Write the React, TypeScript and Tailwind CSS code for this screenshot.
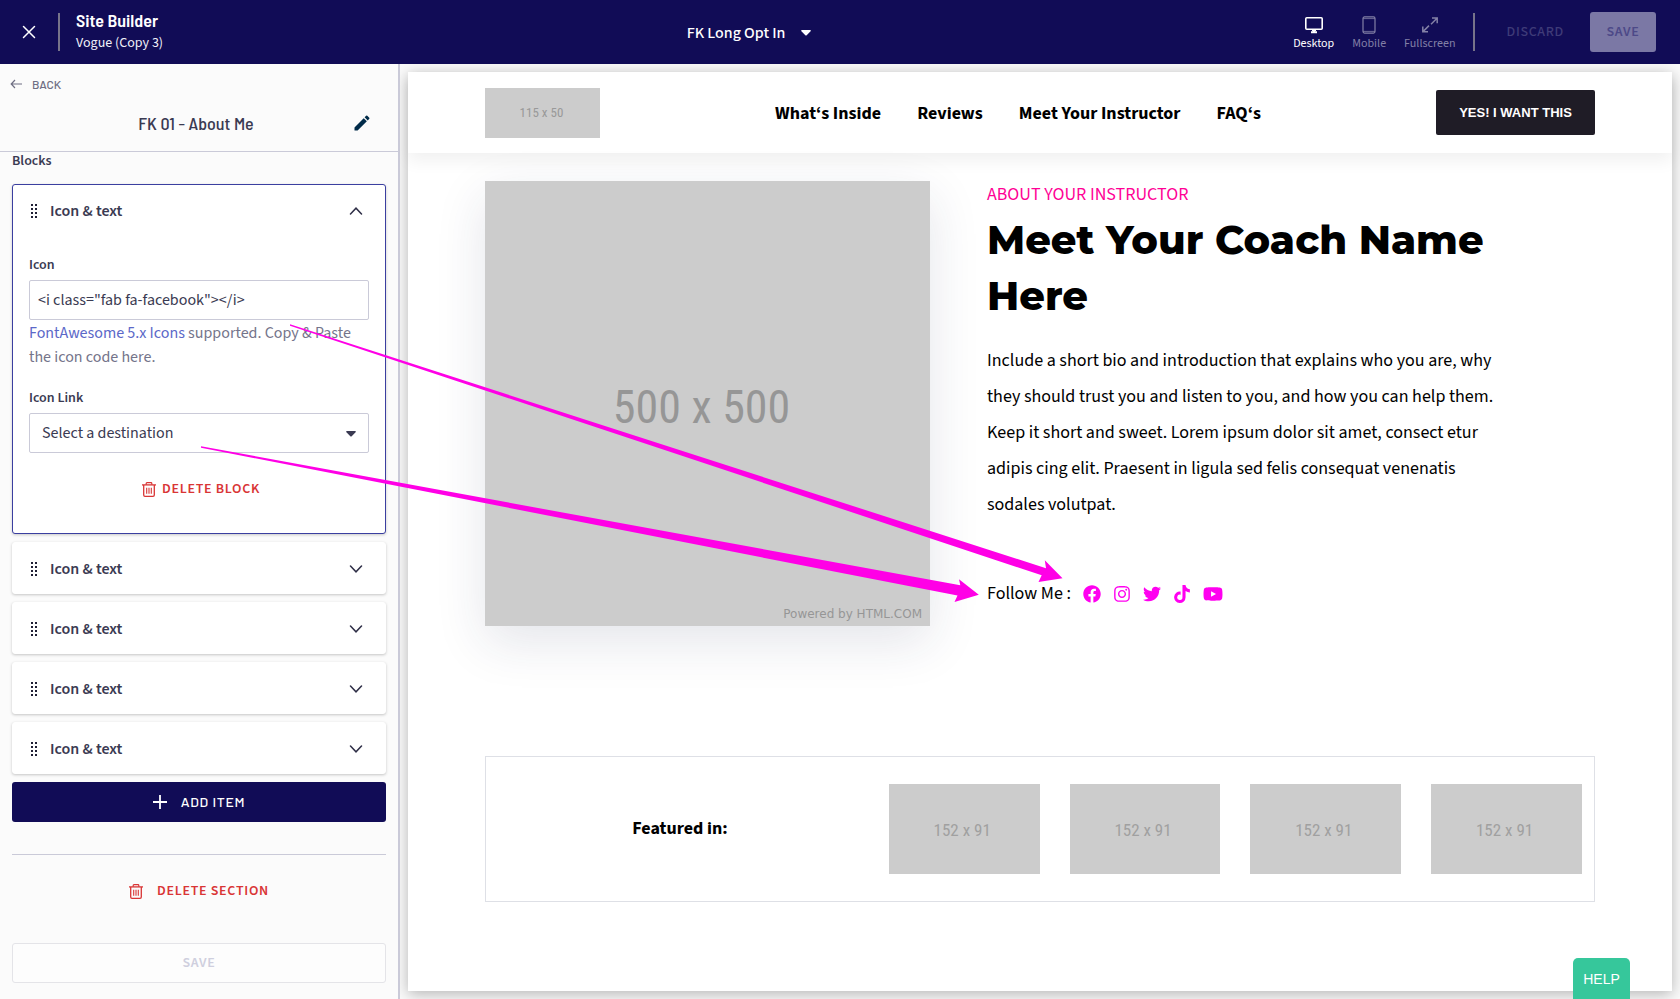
import React from "react";
import { FaFacebook, FaInstagram, FaTwitter, FaTiktok, FaYoutube } from "react-icons/fa";
import { MdEdit } from "react-icons/md";

const BARLOW = "font-['Barlow_Semi_Condensed','Roboto',sans-serif]";
const BARLOW_WIDE = "font-['Barlow','Roboto',sans-serif]";
const SOURCE = "font-['Source_Sans_3','Noto_Sans_CJK_SC',sans-serif]";
const NARROW = "font-['Roboto_Condensed','Roboto',sans-serif]";

function Caret({ className }: { className: string }) {
  return (
    <svg className={className} width="10" height="6" viewBox="0 0 10 6" fill="currentColor" aria-hidden="true">
      <path d="M1 0h8c.8 0 1.200.8.6 1.300L5.700 5.200a1 1 0 0 1-1.400 0L.4 1.300C-.2.8.2 0 1 0z" />
    </svg>
  );
}

function Chevron({ up = false }: { up?: boolean }) {
  return (
    <svg width="14" height="8" viewBox="0 0 14 8" fill="none" stroke="#2f2f47" strokeWidth="1.500" strokeLinecap="round" aria-hidden="true">
      <path d={up ? "M1.500 7L7 1.200L12.500 7" : "M1.500 1L7 6.800L12.500 1"} />
    </svg>
  );
}

function Grip() {
  return (
    <svg width="6" height="14" viewBox="0 0 6 14" fill="#1f1f35" shapeRendering="crispEdges" aria-hidden="true">
      {[0, 4, 8, 12].map((y) => (
        <React.Fragment key={y}>
          <rect x="0" y={y} width="2" height="2" />
          <rect x="4" y={y} width="2" height="2" />
        </React.Fragment>
      ))}
    </svg>
  );
}

function Trash() {
  return (
    <svg width="14" height="15" viewBox="0 0 14 15" fill="none" stroke="currentColor" aria-hidden="true">
      <path d="M0 2.900h14" strokeWidth="1.300" />
      <path d="M4.200 2.700V1.500c0-.5.3-.8.8-.8h4c.5 0 .8.3.8.8v1.200" strokeWidth="1.200" />
      <path d="M1.700 3v10c0 .8.5 1.300 1.300 1.300h8c.8 0 1.300-.5 1.300-1.300V3" strokeWidth="1.300" />
      <path d="M4.700 5.700v6M7 5.700v6M9.300 5.700v6" strokeWidth="1.100" />
    </svg>
  );
}

function BlockHeader({ open = false }: { open?: boolean }) {
  return (
    <button type="button" aria-expanded={open} className="flex h-[50px] w-full items-center pl-[18px] pr-[22px] pt-0.5 text-left">
      <Grip />
      <span className="ml-[13px] flex-1 text-base font-semibold text-[#3a3a52]">Icon &amp; text</span>
      <Chevron up={open} />
    </button>
  );
}

function TopBar() {
  return (
    <header className="flex h-16 shrink-0 items-center justify-between bg-[#110c56] pr-6 text-white">
      <div className="flex w-[205px] items-center">
        <button type="button" aria-label="Close" className="ml-[22px]">
          <svg width="14" height="14" viewBox="0 0 14 14" stroke="currentColor" strokeWidth="1.500" strokeLinecap="round">
            <path d="M1.500 1.500l11 11M12.500 1.500l-11 11" />
          </svg>
        </button>
        <span className="ml-[22px] h-[38px] w-0.5 bg-[#77748a]" />
        <div className="ml-4 flex flex-col gap-0.5 pb-0.5">
          <h1 className={`${BARLOW} text-lg leading-[22px] font-semibold`}>Site Builder</h1>
          <p className="text-sm leading-5 text-[#f0f0f8]">Vogue (Copy 3)</p>
        </div>
      </div>
      <div className="relative pt-0.5">
        <select aria-label="Page" className="appearance-none bg-transparent pr-[26px] text-base font-medium [field-sizing:content]">
          <option>FK Long Opt In</option>
        </select>
        <Caret className="pointer-events-none absolute top-[11px] right-0" />
      </div>
      <div className="flex items-center">
        <nav aria-label="Preview size" className="flex gap-[18px] pt-[3px] text-xs leading-4">
          <button type="button" className="flex flex-col items-center gap-0.5">
            <svg width="18" height="18" viewBox="0 0 18 18" fill="none" stroke="currentColor" strokeWidth="1.600">
              <rect x=".8" y="1.800" width="16.400" height="11.400" rx="1" />
              <path d="M6 16.200h6M9 13v3" strokeWidth="2" />
              <path d="M7 14.500h4" />
            </svg>
            Desktop
          </button>
          <button type="button" className="flex flex-col items-center gap-0.5 text-[#8380a6]">
            <svg width="14" height="18" viewBox="0 0 14 18" fill="none" stroke="currentColor" strokeWidth="1.200">
              <rect x="1" y=".9" width="12" height="16.200" rx="1.500" />
              <path d="M1 2.600h12M1 15.400h12" strokeWidth=".8" />
            </svg>
            Mobile
          </button>
          <button type="button" className="flex flex-col items-center gap-0.5 text-[#8380a6]">
            <svg width="18" height="18" viewBox="0 0 18 18" fill="none" stroke="currentColor" strokeWidth="1.500">
              <path d="M11 2h5.200v5.200M16 2.200l-6 6M7 15.800H1.800v-5.200M2 15.600l6-6" />
            </svg>
            Fullscreen
          </button>
        </nav>
        <span className="ml-[17px] h-[38px] w-0.5 bg-[#77748a]" />
        <button type="button" disabled className="ml-4 h-10 px-4 text-sm font-medium tracking-wider text-[#3f3b78]">
          DISCARD
        </button>
        <button type="button" disabled className="ml-2.5 h-10 w-[66px] rounded-[3px] bg-[#7b78a5] text-sm font-semibold tracking-wider text-[#4d4988]">
          SAVE
        </button>
      </div>
    </header>
  );
}

function Sidebar() {
  return (
    <aside className="flex w-[400px] shrink-0 flex-col border-r-2 border-[#cacad8] bg-[#fbfbfb] text-[#3a3a52]">
      <div className="border-b border-[#cacad8]">
        <a href="#sections" className={`${BARLOW_WIDE} mt-2.5 ml-2.5 flex w-fit items-center gap-2.5 text-xs leading-5 font-medium text-[#6f6f83]`}>
          <svg width="12" height="10" viewBox="0 0 12 10" fill="none" stroke="currentColor" strokeWidth="1.200" aria-hidden="true">
            <path d="M5 1L1.200 5L5 9M1.200 5H12" />
          </svg>
          BACK
        </a>
        <div className="mt-[15px] mb-3.5 flex h-7 items-center pl-9 pr-[26px]">
          <h2 className={`${BARLOW} flex-1 pl-2 pr-1 text-center text-lg font-medium`}>FK 01 - About Me</h2>
          <button type="button" aria-label="Rename section">
            <MdEdit size={20} color="#002b49" />
          </button>
        </div>
      </div>
      <div className="flex flex-1 flex-col px-3 pb-4">
        <h3 className="text-sm leading-[18px] font-semibold">Blocks</h3>
        <div className="mt-3.5 flex flex-col gap-2">
          <section className="rounded-[3px] border border-[#3b3fa0] bg-white shadow-[0_1px_3px_rgba(0,0,0,0.2)]">
            <BlockHeader open />
            <div className="flex flex-col px-4 pt-5 pb-6">
              <label htmlFor="icon" className="text-sm leading-5 font-semibold">Icon</label>
              <input id="icon" type="text" defaultValue={'<i class="fab fa-facebook"></i>'} className="mt-[5px] h-10 w-full rounded-[2px] border border-[#cacad8] bg-white px-2 text-base" />
              <p className="mt-px text-base leading-6 text-[#74748a]">
                <a href="#fontawesome" className="text-[#5b68c8]">FontAwesome 5.x Icons</a> supported. Copy &amp; Paste the icon code here.
              </p>
              <label htmlFor="link" className="mt-[19px] text-sm leading-5 font-semibold">Icon Link</label>
              <div className="relative mt-[5px]">
                <select id="link" className="h-10 w-full appearance-none rounded-[2px] border border-[#cacad8] bg-white px-3 text-base">
                  <option>Select a destination</option>
                </select>
                <Caret className="pointer-events-none absolute top-[18px] right-[13px]" />
              </div>
              <button type="button" className="mt-4 flex h-10 items-center justify-center gap-1.5 pl-1 text-sm font-semibold tracking-wider text-[#d93535]">
                <Trash />
                DELETE BLOCK
              </button>
            </div>
          </section>
          {[1, 2, 3, 4].map((n) => (
            <section key={n} className="rounded-[3px] border border-white bg-white shadow-[0_1px_3px_rgba(0,0,0,0.22)]">
              <BlockHeader />
            </section>
          ))}
          <button type="button" className={`${BARLOW_WIDE} flex h-10 items-center justify-center gap-3.5 rounded-[3px] bg-[#110c56] text-sm font-medium tracking-wider text-white`}>
            <svg width="14" height="14" viewBox="0 0 14 14" stroke="currentColor" strokeWidth="1.800" aria-hidden="true">
              <path d="M7 0v14M0 7h14" />
            </svg>
            ADD ITEM
          </button>
        </div>
        <hr className="mt-8 border-[#cacad8]" />
        <button type="button" className="mt-4 flex h-10 items-center justify-center gap-3.5 text-sm font-semibold tracking-wider text-[#d93535]">
          <Trash />
          DELETE SECTION
        </button>
        <button type="button" disabled className="mt-auto h-10 rounded-[3px] border border-[#e4e4e8] bg-[#fdfdfd] text-sm font-semibold tracking-wider text-[#cfcfde]">
          SAVE
        </button>
      </div>
    </aside>
  );
}

function Preview() {
  return (
    <main className="flex min-w-0 flex-1 flex-col overflow-hidden bg-[#fafafa] p-2 text-lg text-black">
      <div className="flex-1 bg-white shadow-[0_3px_14px_rgba(0,0,0,0.28)]">
        <div className="relative bg-white shadow-[0_8px_16px_rgba(0,0,0,0.06)]">
          <div className="mx-auto flex h-[81px] max-w-[1110px] items-center justify-between">
            <div className={`${NARROW} flex h-[50px] w-[115px] items-center justify-center bg-[#ccc] pt-0.5 pr-0.5 text-[13px] text-[#999]`}>115 x 50</div>
            <nav className="flex gap-9 pt-0.5 font-bold">
              <a href="#inside">What‘s Inside</a>
              <a href="#reviews">Reviews</a>
              <a href="#instructor">Meet Your Instructor</a>
              <a href="#faq">FAQ‘s</a>
            </nav>
            <button type="button" className="h-[45px] w-[159px] rounded-[2px] bg-[#1f1c26] pt-0.5 font-['Liberation_Sans',Arial,sans-serif] text-[13px] font-bold text-white">
              YES! I WANT THIS
            </button>
          </div>
        </div>
        <div className="mx-auto max-w-[1110px] pt-7">
          <section id="instructor" className="flex items-start">
            <div className="relative flex aspect-square w-[445px] items-center justify-center bg-[#ccc] pt-2 pr-3 shadow-[0_16px_48px_rgba(31,45,80,0.12)]">
              <span className={`${NARROW} text-[46px] text-[#969696]`}>500 x 500</span>
              <span className="absolute right-2 bottom-1 font-['DejaVu_Sans',sans-serif] text-xs text-[#969696]">Powered by HTML.COM</span>
            </div>
            <div className="ml-[57px] max-w-lg">
              <p className="leading-[27px] text-[#ff0095]">ABOUT YOUR INSTRUCTOR</p>
              <h2 className="mt-1 font-['Montserrat','Open_Sans',sans-serif] text-[40px] leading-14 font-extrabold">Meet Your Coach Name Here</h2>
              <p className="mt-[19px] leading-9">
                Include a short bio and introduction that explains who you are, why they should trust you and listen to you, and how you can help them. Keep it short and sweet. Lorem ipsum dolor sit amet, consect etur adipis cing elit. Praesent in ligula sed felis consequat venenatis sodales volutpat.
              </p>
              <div className="mt-[53px] flex items-center leading-9">
                Follow Me :
                <div className="ml-3 flex items-center gap-[13px] text-[#ff00f0]">
                  <a href="#facebook" aria-label="Facebook"><FaFacebook className="h-[18px] w-[18px]" /></a>
                  <a href="#instagram" aria-label="Instagram"><FaInstagram className="h-[18px] w-4" /></a>
                  <a href="#twitter" aria-label="Twitter"><FaTwitter className="h-[18px] w-[18px]" /></a>
                  <a href="#tiktok" aria-label="TikTok"><FaTiktok className="h-[18px] w-4" /></a>
                  <a href="#youtube" aria-label="YouTube"><FaYoutube className="h-[18px] w-5" /></a>
                </div>
              </div>
            </div>
          </section>
          <section className="mt-[130px] flex h-[146px] items-center border border-[#dee0e6]">
            <h3 className="w-[35%] text-center font-bold">Featured in:</h3>
            <div className="ml-[15px] mr-3 grid flex-1 grid-cols-4 gap-[30px]">
              {[1, 2, 3, 4].map((n) => (
                <div key={n} className={`${NARROW} flex h-[90px] items-center justify-center bg-[#ccc] pt-0.5 pr-1 text-[17px] text-[#a0a0a0]`}>152 x 91</div>
              ))}
            </div>
          </section>
        </div>
      </div>
    </main>
  );
}

export default function App() {
  return (
    <div className={`${SOURCE} relative flex min-h-screen flex-col overflow-hidden`}>
      <TopBar />
      <div className="flex flex-1">
        <Sidebar />
        <Preview />
      </div>
      <svg className="pointer-events-none absolute top-0 left-0" width="1070" height="620" viewBox="0 0 1070 620" fill="#ff00e6" aria-hidden="true">
        <path d="M290 324.300L1046 568.300L1044.800 560.300L1062.500 578.200L1038.500 582L1041.700 575.300L290 325.700z" />
        <path d="M201 446.300L960.300 585.300L959 579.200L978.800 594.800L954.500 602L957.500 595.600L201 447.700z" />
      </svg>
      <button type="button" className="fixed right-[50px] bottom-0 h-[41px] w-[57px] rounded-t-[5px] bg-[#36c79b] font-['Liberation_Sans',Arial,sans-serif] text-sm text-white">
        HELP
      </button>
    </div>
  );
}
